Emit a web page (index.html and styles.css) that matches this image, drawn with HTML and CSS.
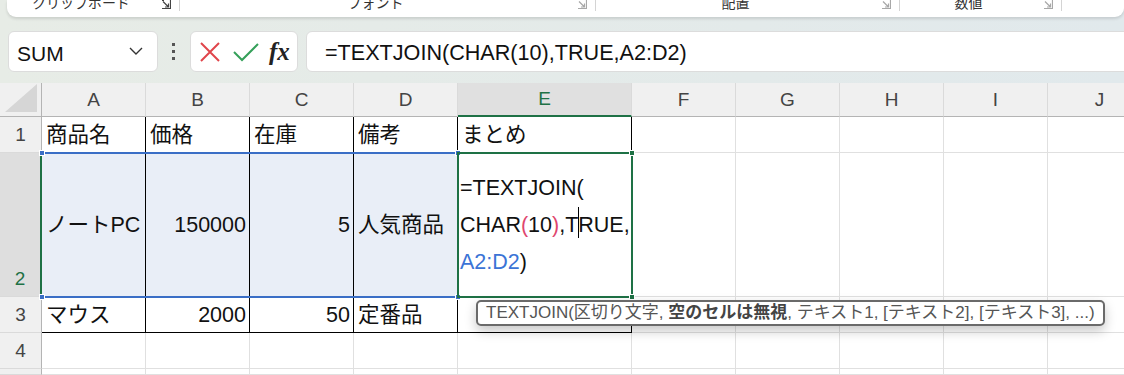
FILE: index.html
```html
<!DOCTYPE html>
<html lang="ja">

<head>
    <meta charset="UTF-8">
    <meta name="viewport" content="width=device-width, initial-scale=1.0">
    <title>TEXTJOIN</title>
    <link rel="stylesheet" href="styles.css">
</head>

<body>
    <!-- リボン（下端だけ見えている） -->
    <div class="ribbon">
        <div class="group g1">
            <span class="label">クリップボード</span>
            <svg class="launch dark" width="10" height="9" viewBox="0 0 10 9"><path d="M1 0.5H3M9.5 0V8.5H1M2 1.5L7.5 7M4 7H7.5V3.5" fill="none" stroke="currentColor" stroke-width="1.2"/></svg>
        </div>
        <div class="group g2">
            <span class="label">フォント</span>
            <svg class="launch" width="10" height="9" viewBox="0 0 10 9"><path d="M9.5 0V8.5H1M2 1.5L7.5 7M4 7H7.5V3.5" fill="none" stroke="currentColor" stroke-width="1.2"/></svg>
        </div>
        <div class="group g3">
            <span class="label">配置</span>
            <svg class="launch" width="10" height="9" viewBox="0 0 10 9"><path d="M9.5 0V8.5H1M2 1.5L7.5 7M4 7H7.5V3.5" fill="none" stroke="currentColor" stroke-width="1.2"/></svg>
        </div>
        <div class="group g4">
            <span class="label">数値</span>
            <svg class="launch" width="10" height="9" viewBox="0 0 10 9"><path d="M9.5 0V8.5H1M2 1.5L7.5 7M4 7H7.5V3.5" fill="none" stroke="currentColor" stroke-width="1.2"/></svg>
        </div>
        <div class="group g5"></div>
    </div>

    <!-- 数式バー -->
    <div class="fbar">
        <div class="namebox">
            <span>SUM</span>
            <svg width="14" height="8" viewBox="0 0 14 8"><path d="M1 1L7 7L13 1" fill="none" stroke="#333" stroke-width="1.4"/></svg>
        </div>
        <div class="grip"><i></i><i></i><i></i></div>
        <div class="fbtns">
            <svg width="22" height="22" viewBox="0 0 22 22"><path d="M2 2L20 20M20 2L2 20" stroke="#e0454b" stroke-width="2"/></svg>
            <svg width="26" height="20" viewBox="0 0 26 20"><path d="M1 10L9 18L25 2" fill="none" stroke="#35a05a" stroke-width="2"/></svg>
            <span class="fx">fx</span>
        </div>
        <div class="finput">=TEXTJOIN(CHAR(10),TRUE,A2:D2)</div>
    </div>

    <!-- シート -->
    <div class="sheet">
        <div class="hd corner"><svg width="32" height="28" viewBox="0 0 32 28"><path d="M32 0V28H0Z" fill="#d6d6d6"/></svg></div>
        <div class="hd col">A</div>
        <div class="hd col">B</div>
        <div class="hd col">C</div>
        <div class="hd col">D</div>
        <div class="hd col on">E</div>
        <div class="hd col">F</div>
        <div class="hd col">G</div>
        <div class="hd col">H</div>
        <div class="hd col">I</div>
        <div class="hd col">J</div>

        <div class="hd row">1</div>
        <div class="c b">商品名</div>
        <div class="c b">価格</div>
        <div class="c b">在庫</div>
        <div class="c b">備考</div>
        <div class="c b">まとめ</div>
        <div class="c"></div>
        <div class="c"></div>
        <div class="c"></div>
        <div class="c"></div>
        <div class="c"></div>

        <div class="hd row on">2</div>
        <div class="c b sel">ノートPC</div>
        <div class="c b sel num">150000</div>
        <div class="c b sel num">5</div>
        <div class="c b sel">人気商品</div>
        <div class="c b edit">=TEXTJOIN(<br>CHAR<span class="paren">(</span>10<span class="paren">)</span>,T<span class="caret"></span>RUE,<br><span class="ref">A2:D2</span>)</div>
        <div class="c"></div>
        <div class="c"></div>
        <div class="c"></div>
        <div class="c"></div>
        <div class="c"></div>

        <div class="hd row">3</div>
        <div class="c b">マウス</div>
        <div class="c b num">2000</div>
        <div class="c b num">50</div>
        <div class="c b">定番品</div>
        <div class="c b"></div>
        <div class="c"></div>
        <div class="c"></div>
        <div class="c"></div>
        <div class="c"></div>
        <div class="c"></div>

        <div class="hd row">4</div>
        <div class="c"></div>
        <div class="c"></div>
        <div class="c"></div>
        <div class="c"></div>
        <div class="c"></div>
        <div class="c"></div>
        <div class="c"></div>
        <div class="c"></div>
        <div class="c"></div>
        <div class="c"></div>

        <div class="hd row last"></div>
        <div class="c"></div>
        <div class="c"></div>
        <div class="c"></div>
        <div class="c"></div>
        <div class="c"></div>
        <div class="c"></div>
        <div class="c"></div>
        <div class="c"></div>
        <div class="c"></div>
        <div class="c"></div>

        <!-- 選択範囲と編集中セルの枠 -->
        <div class="range"><i class="h tl"></i><i class="h tr"></i><i class="h bl"></i><i class="h br"></i></div>
        <div class="active"><i class="h tr"></i><i class="h br"></i></div>

        <!-- 関数のヒント -->
        <div class="tip">TEXTJOIN(区切り文字, <b>空のセルは無視</b>, テキスト1, [テキスト2], [テキスト3], ...)</div>
    </div>
</body>

</html>
```

FILE: styles.css
```css
* {
    margin: 0;
    padding: 0;
    box-sizing: border-box;
}

body {
    width: 1124px;
    height: 375px;
    overflow: hidden;
    background: linear-gradient(90deg, #e7ece6, #e1e9ec);
    font-family: "Liberation Sans", "Noto Sans CJK JP", sans-serif;
    color: #111;
}

/* リボン */
.ribbon {
    margin-left: 7px;
    height: 17px;
    display: flex;
    background-color: #fff;
    border-radius: 0 0 9px 9px;
    box-shadow: 0 2px 3px rgba(0, 0, 0, .12);
    overflow: hidden;
}

.group {
    height: 11px;
    display: flex;
    align-items: flex-start;
    border-right: 1px solid #d4d4d4;
}

.g1 { width: 173px; }
.g2 { width: 416px; }
.g3 { width: 304px; }
.g4 { width: 162px; }
.g5 { flex: 1; border-right: none; }

.label {
    flex: 1;
    text-align: center;
    font-family: "Noto Sans CJK JP", sans-serif;
    font-size: 14px;
    line-height: 15px;
    margin-top: -5px;
    color: #333;
}

.launch {
    margin: 0 8px 0 6px;
    color: #a8a8a8;
}

.launch.dark {
    color: #444;
}

/* 数式バー */
.fbar {
    display: flex;
    height: 41px;
    margin: 14px 0 0 8px;
}

.namebox,
.fbtns,
.finput {
    background-color: #fff;
    border: 1px solid #dcdcdc;
    border-radius: 6px;
}

.namebox {
    width: 150px;
    display: flex;
    align-items: center;
    justify-content: space-between;
    padding: 4px 14px 0 8px;
    font-size: 21px;
}

.namebox svg {
    margin-top: -6px;
}

.grip {
    width: 32px;
    display: flex;
    flex-direction: column;
    align-items: center;
    justify-content: center;
    gap: 4px;
    padding-right: 1px;
}

.grip i {
    width: 3px;
    height: 3px;
    background-color: #555;
}

.fbtns {
    width: 108px;
    display: flex;
    align-items: center;
    padding-left: 8px;
    gap: 12px;
}

.fx {
    font-family: "Liberation Serif", serif;
    font-style: italic;
    font-weight: bold;
    font-size: 25px;
    color: #222;
    margin-left: -2px;
}

.finput {
    flex: 1;
    margin: 0 -20px 0 8px;
    padding: 3px 0 0 18px;
    font-size: 21.6px;
    line-height: 36px;
    border-radius: 6px 0 0 6px;
}

/* シート */
.sheet {
    position: relative;
    margin-top: 11px;
    display: grid;
    grid-template-columns: 42px 104px 104px 104px 104px 174px 104px 104px 104px 104px 104px;
    grid-template-rows: 34px 36px 144px 36px 36px 6px;
    background-color: #fff;
}

.hd {
    background-color: #f0f0f0;
    color: #444;
    font-size: 19px;
    display: flex;
    justify-content: center;
}

.corner {
    border-right: 1px solid #b4b4b4;
    border-bottom: 1px solid #b4b4b4;
    align-items: flex-end;
    justify-content: flex-end;
    padding: 0 4px 4px 0;
}

.col {
    align-items: center;
    border-right: 1px solid #dadada;
    border-bottom: 1px solid #b4b4b4;
}

.col.on {
    background-color: #e0e0e0;
    color: #1e7145;
    border-bottom: 2px solid #1e7145;
}

.row {
    align-items: flex-end;
    padding-bottom: 6px;
    border-right: 1px solid #b4b4b4;
    border-bottom: 1px solid #dadada;
}

.row.on {
    background-color: #dedede;
    color: #1e7145;
    border-right: 2px solid #1e7145;
}

.row.last {
    padding: 0;
}

.c {
    display: flex;
    align-items: center;
    padding: 0 4px;
    font-size: 21.5px;
    line-height: 26px;
    border-right: 1px solid #e0e0e0;
    border-bottom: 1px solid #e0e0e0;
    white-space: nowrap;
    overflow: hidden;
}

.c.b {
    border-right-color: #000;
    border-bottom-color: #000;
}

.c.num {
    justify-content: flex-end;
    padding-right: 3px;
}

.c.sel {
    background-color: #e9eef7;
}

.edit {
    display: block;
    padding: 17px 0 0 2px;
    line-height: 37px;
    overflow: visible;
}

.paren {
    color: #e0466e;
}

.ref {
    color: #3b74d6;
}

.caret {
    display: inline-block;
    width: 0;
    height: 31px;
    border-left: 1px solid #000;
    vertical-align: -6px;
    margin-right: -1px;
}

.range {
    position: absolute;
    left: 42px;
    top: 69px;
    width: 416px;
    height: 146px;
    border-top: 2px solid #3a6ec6;
    border-bottom: 2px solid #3a6ec6;
}

.active {
    position: absolute;
    left: 457px;
    top: 69px;
    width: 176px;
    height: 146px;
    border: 2px solid #1e7145;
}

.h {
    position: absolute;
    width: 6px;
    height: 6px;
    background-color: #3a6ec6;
    border: 1px solid #fff;
}

.range .tl { left: -3px; top: -4px; }
.range .tr { right: -3px; top: -4px; }
.range .bl { left: -3px; bottom: -4px; }
.range .br { right: -3px; bottom: -4px; }

.active .h {
    background-color: #1e7145;
}

.active .tr { right: -4px; top: -4px; }
.active .br { right: -4px; bottom: -4px; }

.tip {
    position: absolute;
    left: 476px;
    top: 217px;
    padding: 0 8px;
    font-size: 17px;
    line-height: 22px;
    color: #555;
    background-color: #fff;
    border: 2px solid #6a6a6a;
    border-radius: 5px;
    box-shadow: 0 5px 12px rgba(0, 0, 0, .22);
    white-space: nowrap;
}

.tip b {
    color: #444;
}
```
